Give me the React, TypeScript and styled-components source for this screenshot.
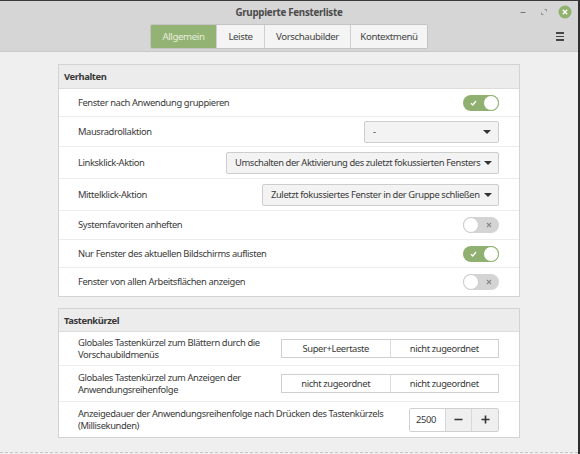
import { FC } from "react";
import styled, { createGlobalStyle } from "styled-components";

const GlobalStyle = createGlobalStyle`
  html, body {
    margin: 0;
    padding: 0;
    background: #efefef;
  }
  body {
    font-family: "Noto Sans", "Open Sans", sans-serif;
    font-size: 9.4px;
    letter-spacing: -0.4px;
    color: #3a3a3a;
  }
`;

const Window = styled.div`
  width: 580px;
  height: 454px;
  box-sizing: border-box;
  border-top: 1px solid #3a3a3a;
  border-right: 2px solid #2e2e2e;
  background: #efefef;
  display: flex;
  flex-direction: column;
  overflow: hidden;
`;

const Header = styled.div`
  height: 51px;
  box-sizing: border-box;
  background: #d6d6d6;
  border-bottom: 1px solid #c9c9c9;
  display: flex;
  flex-direction: column;
  flex-shrink: 0;
`;

const TitleRow = styled.div`
  height: 23px;
  display: flex;
  align-items: center;
  justify-content: center;
  position: relative;
`;

const Title = styled.div`
  font-size: 9.8px;
  font-weight: bold;
  letter-spacing: -0.3px;
  color: #4a4a4a;
`;

const WindowControls = styled.div`
  position: absolute;
  right: 6px;
  top: 4px;
  display: flex;
  align-items: center;
  gap: 7px;
`;

const ControlButton = styled.div`
  width: 14px;
  height: 14px;
  display: flex;
  align-items: center;
  justify-content: center;
`;

const TabRow = styled.div`
  display: grid;
  grid-template-columns: 1fr auto 1fr;
  align-items: center;
`;

const Tabs = styled.div`
  grid-column: 2;
  display: flex;
  border: 1px solid #c4c4c4;
  border-radius: 2px;
  overflow: hidden;
  height: 25px;
  box-sizing: border-box;
`;

const Tab = styled.div<{ active?: boolean; w: number }>`
  width: ${(p) => p.w}px;
  display: flex;
  align-items: center;
  justify-content: center;
  white-space: nowrap;
  font-size: 9.7px;
  color: ${(p) => (p.active ? "#e6eedd" : "#444")};
  background: ${(p) => (p.active ? "#93b374" : "#f4f4f4")};
  border-left: 1px solid ${(p) => (p.active ? "transparent" : "#cfcfcf")};
  &:first-child {
    border-left: none;
  }
`;

const Menu = styled.div`
  grid-column: 3;
  justify-self: end;
  margin-right: 14px;
  display: flex;
  flex-direction: column;
  gap: 2px;
  span {
    display: block;
    width: 8px;
    height: 1.5px;
    background: #444;
  }
`;

const Content = styled.div`
  flex: 1;
  padding: 12px 0 0 58px;
  display: flex;
  flex-direction: column;
  gap: 11px;
  position: relative;
`;

const Section = styled.div`
  width: 462px;
  box-sizing: border-box;
  border: 1px solid #d3d3d3;
  background: #fff;
`;

const SectionHeader = styled.div<{ h: number }>`
  height: ${(p) => p.h}px;
  box-sizing: border-box;
  background: #ececec;
  border-bottom: 1px solid #dcdcdc;
  display: flex;
  align-items: center;
  padding-left: 5px;
  font-weight: bold;
  color: #383838;
`;

const Row = styled.div<{ h: number }>`
  height: ${(p) => p.h}px;
  box-sizing: border-box;
  display: flex;
  align-items: center;
  justify-content: space-between;
  padding: 0 20px 0 19px;
  border-bottom: 1px solid #ececec;
  &:last-child {
    border-bottom: none;
  }
`;

const Label = styled.div`
  line-height: 12px;
  white-space: nowrap;
`;

const Select = styled.div<{ w: number }>`
  width: ${(p) => p.w}px;
  height: 22px;
  box-sizing: border-box;
  border: 1px solid #cdcdcd;
  border-radius: 2px;
  background: #f3f3f3;
  display: flex;
  align-items: center;
  justify-content: space-between;
  gap: 4px;
  padding: 0 7px 0 8px;
  white-space: nowrap;
`;

const Caret = styled.span`
  flex-shrink: 0;
  width: 0;
  height: 0;
  border-left: 4px solid transparent;
  border-right: 4px solid transparent;
  border-top: 4px solid #333;
`;

const Switch = styled.div<{ on?: boolean }>`
  width: 36px;
  height: 16px;
  border-radius: 8px;
  box-sizing: border-box;
  background: ${(p) => (p.on ? "#8fb070" : "#d4d4d4")};
  position: relative;
  display: flex;
  align-items: center;
  justify-content: ${(p) => (p.on ? "flex-start" : "flex-end")};
  padding: 0 7px;
`;

const Knob = styled.span<{ on?: boolean }>`
  position: absolute;
  top: 0;
  ${(p) => (p.on ? "right: 0;" : "left: 0;")}
  width: 16px;
  height: 16px;
  box-sizing: border-box;
  border-radius: 50%;
  background: #fff;
  border: 1px solid ${(p) => (p.on ? "#8fb070" : "#cdcdcd")};
`;

const Shortcut = styled.div`
  width: 218px;
  height: 19px;
  box-sizing: border-box;
  border: 1px solid #cfcfcf;
  display: flex;
  background: #fff;
`;

const Accel = styled.div`
  flex: 1;
  display: flex;
  align-items: center;
  justify-content: center;
  & + & {
    border-left: 1px solid #dcdcdc;
  }
`;

const Spin = styled.div`
  display: flex;
  height: 24px;
  border: 1px solid #d0d0d0;
  border-radius: 2px;
  box-sizing: border-box;
  width: 90px;
  overflow: hidden;
`;

const SpinValue = styled.div`
  width: 36px;
  display: flex;
  align-items: center;
  padding-left: 6px;
  box-sizing: border-box;
  background: #fff;
`;

const SpinButton = styled.div<{ w: number }>`
  width: ${(p) => p.w}px;
  display: flex;
  align-items: center;
  justify-content: center;
  background: #efefef;
  border-left: 1px solid #d8d8d8;
`;

const Dashed = styled.div`
  position: absolute;
  left: 0;
  right: 0;
  bottom: 1px;
  border-top: 1px dashed #c8c8c8;
`;

const Toggle: FC<{ on?: boolean }> = ({ on }) => (
  <Switch on={on}>
    {on ? (
      <svg width="7" height="6" viewBox="0 0 7 6">
        <path d="M1 3.2 L2.8 5 L6 1" stroke="#fff" strokeWidth="1.3" fill="none" />
      </svg>
    ) : (
      <svg width="6" height="6" viewBox="0 0 6 6">
        <path d="M1 1 L5 5 M5 1 L1 5" stroke="#888" strokeWidth="1.1" />
      </svg>
    )}
    <Knob on={on} />
  </Switch>
);

const App: FC = () => {
  return (
    <Window>
      <GlobalStyle />
      <Header>
        <TitleRow>
          <Title>Gruppierte Fensterliste</Title>
          <WindowControls>
            <ControlButton>
              <svg width="8" height="8" viewBox="0 0 8 8">
                <path d="M1.5 4.5 H6.5" stroke="#777" strokeWidth="1" />
              </svg>
            </ControlButton>
            <ControlButton>
              <svg width="8" height="8" viewBox="0 0 8 8">
                <path d="M4.5 1.5 H6.5 V3.5 M3.5 6.5 H1.5 V4.5" stroke="#888" strokeWidth="0.9" fill="none" />
              </svg>
            </ControlButton>
            <ControlButton>
              <svg width="14" height="14" viewBox="0 0 14 14">
                <circle cx="7" cy="7" r="6.5" fill="#8fb26c" />
                <path d="M4.8 4.8 L9.2 9.2 M9.2 4.8 L4.8 9.2" stroke="#fff" strokeWidth="1.4" />
              </svg>
            </ControlButton>
          </WindowControls>
        </TitleRow>
        <TabRow>
          <Tabs>
            <Tab active w={65}>Allgemein</Tab>
            <Tab w={47}>Leiste</Tab>
            <Tab w={85}>Vorschaubilder</Tab>
            <Tab w={76}>Kontextmenü</Tab>
          </Tabs>
          <Menu>
            <span />
            <span />
            <span />
          </Menu>
        </TabRow>
      </Header>
      <Content>
        <Section>
          <SectionHeader h={24}>Verhalten</SectionHeader>
          <Row h={28}>
            <Label>Fenster nach Anwendung gruppieren</Label>
            <Toggle on />
          </Row>
          <Row h={30}>
            <Label>Mausradrollaktion</Label>
            <Select w={135}>
              <span>-</span>
              <Caret />
            </Select>
          </Row>
          <Row h={32}>
            <Label>Linksklick-Aktion</Label>
            <Select w={273}>
              <span>Umschalten der Aktivierung des zuletzt fokussierten Fensters</span>
              <Caret />
            </Select>
          </Row>
          <Row h={32}>
            <Label>Mittelklick-Aktion</Label>
            <Select w={237}>
              <span>Zuletzt fokussiertes Fenster in der Gruppe schließen</span>
              <Caret />
            </Select>
          </Row>
          <Row h={29}>
            <Label>Systemfavoriten anheften</Label>
            <Toggle />
          </Row>
          <Row h={28}>
            <Label>Nur Fenster des aktuellen Bildschirms auflisten</Label>
            <Toggle on />
          </Row>
          <Row h={28}>
            <Label>Fenster von allen Arbeitsflächen anzeigen</Label>
            <Toggle />
          </Row>
        </Section>
        <Section>
          <SectionHeader h={23}>Tastenkürzel</SectionHeader>
          <Row h={34}>
            <Label>
              Globales Tastenkürzel zum Blättern durch die
              <br />
              Vorschaubildmenüs
            </Label>
            <Shortcut>
              <Accel>Super+Leertaste</Accel>
              <Accel>nicht zugeordnet</Accel>
            </Shortcut>
          </Row>
          <Row h={36}>
            <Label>
              Globales Tastenkürzel zum Anzeigen der
              <br />
              Anwendungsreihenfolge
            </Label>
            <Shortcut>
              <Accel>nicht zugeordnet</Accel>
              <Accel>nicht zugeordnet</Accel>
            </Shortcut>
          </Row>
          <Row h={35}>
            <Label>
              Anzeigedauer der Anwendungsreihenfolge nach Drücken des Tastenkürzels
              <br />
              (Millisekunden)
            </Label>
            <Spin>
              <SpinValue>2500</SpinValue>
              <SpinButton w={27}>
                <svg width="9" height="9" viewBox="0 0 9 9">
                  <path d="M0.5 4.5 H8.5" stroke="#333" strokeWidth="1.6" />
                </svg>
              </SpinButton>
              <SpinButton w={27}>
                <svg width="9" height="9" viewBox="0 0 9 9">
                  <path d="M0.5 4.5 H8.5 M4.5 0.5 V8.5" stroke="#333" strokeWidth="1.6" />
                </svg>
              </SpinButton>
            </Spin>
          </Row>
        </Section>
        <Dashed />
      </Content>
    </Window>
  );
};

export default App;
